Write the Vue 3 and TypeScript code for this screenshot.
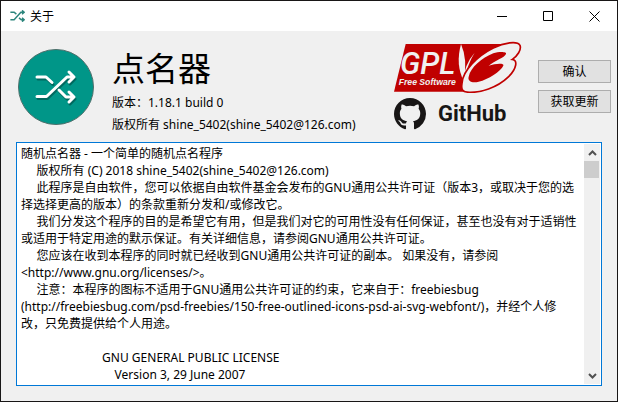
<script setup lang="ts">
import { ref } from 'vue'

const appName = '点名器'
const version = '1.18.1 build 0'
const licenseText = ref(
  [
    '随机点名器 - 一个简单的随机点名程序',
    '     版权所有 (C) 2018 shine_5402(shine_5402@126.com)',
    '     此程序是自由软件，您可以依据自由软件基金会发布的GNU通用公共许可证（版本3，或取决于您的选',
    '择选择更高的版本）的条款重新分发和/或修改它。',
    '     我们分发这个程序的目的是希望它有用，但是我们对它的可用性没有任何保证，甚至也没有对于适销性',
    '或适用于特定用途的默示保证。有关详细信息，请参阅GNU通用公共许可证。',
    '     您应该在收到本程序的同时就已经收到GNU通用公共许可证的副本。 如果没有，请参阅',
    '<http://www.gnu.org/licenses/>。',
    '     注意：本程序的图标不适用于GNU通用公共许可证的约束，它来自于：freebiesbug',
    '(http://freebiesbug.com/psd-freebies/150-free-outlined-icons-psd-ai-svg-webfont/)，并经个人修',
    '改，只免费提供给个人用途。',
    '',
    '                          GNU GENERAL PUBLIC LICENSE',
    '                              Version 3, 29 June 2007',
  ].join('\n'),
)
</script>

<template>
  <div class="window">
    <header class="titlebar">
      <svg class="app-icon" viewBox="0 0 40 32" aria-hidden="true">
        <path d="M1 6h10l6 5M1 26h10L29 6h8M32 1l6 5-6 5M24 21l6 5h7M32 21l6 5-6 5" />
      </svg>
      <span class="caption">关于</span>
      <button class="win-btn" aria-label="最小化">
        <svg viewBox="0 0 11 11"><path d="M0 5.500h10" /></svg>
      </button>
      <button class="win-btn" aria-label="最大化">
        <svg viewBox="0 0 11 11"><path d="M.5.5h9v9h-9z" /></svg>
      </button>
      <button class="win-btn" aria-label="关闭">
        <svg viewBox="0 0 11 11"><path d="M.5.5l10 10M10.500.5l-10 10" /></svg>
      </button>
    </header>

    <main class="body">
      <section class="info">
        <svg class="badge" viewBox="0 0 76 76" aria-hidden="true">
          <circle cx="38" cy="38" r="37.500" />
          <g class="shade"><path d="M20 30h9l6 5.500M20 49.500h9.500L50 30h7M52 25l5 5-5 5M42 43l7 7h8M52 45l5 5-5 5" /></g>
          <g class="mark"><path d="M19 28h9l6 5.500M19 47.500h9.500L49 28h7M51 23l5 5-5 5M41 41l7 7h8M51 43l5 5-5 5" /></g>
        </svg>
        <div class="about">
          <h1>{{ appName }}</h1>
          <p>版本：{{ version }}</p>
          <p>版权所有 shine_5402(shine_5402@126.com)</p>
        </div>
        <div class="logos">
          <svg class="gpl" viewBox="42 33 384 156" role="img" aria-label="GPL v3 Free Software">
            <path class="red" d="M77 42H400L262 185H42z" />
            <path class="white" d="M243 42Q264 90 251 152Q226 105 243 42z" />
            <path class="white" d="M284 68Q264 98 251 156Q250 106 284 68z" />
            <path class="ring" d="M246 160C248 122 292 78 340 54C372 38 412 32 420 46C425 59 412 78 397 88C414 90 410 116 386 140C350 175 300 188 268 187C246 186 243 178 246 160z" />
            <path class="red" d="M266 140C272 112 305 84 340 70C356 64 382 64 378 72C374 83 344 92 326 107C346 100 374 98 370 107C362 124 325 148 296 155C276 160 262 153 266 140z" />
            <text class="gpl-name" x="60" y="133">GPL</text>
            <text class="gpl-sub" x="56" y="165">Free Software</text>
          </svg>
          <div class="github">
            <svg class="octocat" viewBox="0 0 16 16" aria-hidden="true">
              <path d="M8 0C3.580 0 0 3.580 0 8c0 3.540 2.290 6.530 5.470 7.590.4.070.55-.17.55-.38 0-.19-.01-.82-.01-1.490-2.010.37-2.530-.49-2.690-.94-.09-.23-.48-.94-.82-1.130-.28-.15-.68-.52-.01-.53.63-.01 1.080.58 1.230.82.72 1.210 1.870.87 2.330.66.07-.52.28-.87.51-1.070-1.780-.2-3.640-.89-3.640-3.950 0-.87.31-1.590.82-2.150-.08-.2-.36-1.020.08-2.120 0 0 .67-.21 2.200.82.64-.18 1.320-.27 2-.27s1.360.09 2 .27c1.530-1.040 2.200-.82 2.200-.82.44 1.100.16 1.920.08 2.120.51.56.82 1.270.82 2.150 0 3.070-1.870 3.750-3.650 3.950.29.25.54.73.54 1.480 0 1.070-.01 1.930-.01 2.200 0 .21.15.46.55.38A8.010 8.010 0 0 0 16 8c0-4.420-3.580-8-8-8z" />
            </svg>
            <span>GitHub</span>
          </div>
        </div>
        <div class="actions">
          <button>确认</button>
          <button>获取更新</button>
        </div>
      </section>

      <section class="license">
        <textarea v-model="licenseText" readonly wrap="off" aria-label="许可证"></textarea>
        <div class="scrollbar">
          <button class="arrow" aria-label="向上滚动">
            <svg viewBox="0 0 9 6"><path d="M1 5l3.500-3.500L8 5" /></svg>
          </button>
          <div class="track"><div class="thumb"></div></div>
          <button class="arrow" aria-label="向下滚动">
            <svg viewBox="0 0 9 6"><path d="M1 1l3.500 3.500L8 1" /></svg>
          </button>
        </div>
      </section>
    </main>
  </div>
</template>

<style>
body {
  margin: 0;
}
</style>

<style scoped>
.window {
  box-sizing: border-box;
  display: flex;
  flex-direction: column;
  height: 100vh;
  border: 1px solid #181616;
  background: #f0f0f0;
  color: #000;
  font: 12px/17px "Noto Sans", "Noto Sans CJK SC", sans-serif;
}
button,
textarea {
  font: inherit;
  color: inherit;
}
.titlebar {
  display: flex;
  align-items: center;
  height: 30px;
  flex: none;
  padding-left: 9px;
  background: #fff;
}
.app-icon {
  width: 15px;
  height: 12px;
  margin-right: 5px;
  fill: none;
  stroke: #2c857c;
  stroke-width: 4;
}
.caption {
  flex: 1;
}
.win-btn {
  display: flex;
  align-items: center;
  justify-content: center;
  width: 46px;
  height: 30px;
  padding: 0;
  border: 0;
  background: none;
}
.win-btn svg {
  width: 11px;
  height: 11px;
  fill: none;
  stroke: #000;
}
.body {
  flex: 1;
  min-height: 0;
  display: flex;
  flex-direction: column;
  padding-bottom: 15px;
}
.info {
  display: flex;
  height: 111px;
  flex: none;
  padding: 0 6px 0 17px;
}
.badge {
  width: 76px;
  height: 76px;
  margin-top: 18px;
  flex: none;
}
.badge circle {
  fill: #009688;
  stroke: #4f6f6b;
}
.badge path {
  fill: none;
  stroke-width: 3;
  stroke-linecap: round;
  stroke-linejoin: round;
}
.shade {
  stroke: #00695f;
}
.mark {
  stroke: #fff;
}
.about {
  flex: 1;
  padding: 15px 0 0 18px;
  white-space: nowrap;
}
h1 {
  margin: 0;
  font-size: 33px;
  line-height: 46px;
  font-weight: 400;
}
p {
  margin: 0;
  line-height: 22px;
}
.logos {
  width: 128px;
  margin-right: 16px;
  padding-top: 10px;
  flex: none;
}
.gpl {
  display: block;
  width: 128px;
  height: 52px;
}
.red {
  fill: #c00000;
}
.white {
  fill: #f0f0f0;
}
.ring {
  fill: #f0f0f0;
  stroke: #c00000;
  stroke-width: 5;
}
.gpl-name {
  fill: #f0f0f0;
  font: italic 500 92px Roboto, sans-serif;
}
.gpl-sub {
  fill: #f0f0f0;
  font: italic 700 26px "Liberation Sans", sans-serif;
}
.github {
  display: flex;
  align-items: center;
  gap: 12px;
  margin-top: 5px;
  color: #181616;
  font: 700 22px/32px Roboto, sans-serif;
}
.octocat {
  width: 32px;
  height: 32px;
  fill: #181616;
}
.actions {
  display: flex;
  flex-direction: column;
  gap: 7px;
  width: 73px;
  padding-top: 29px;
  flex: none;
}
.actions button {
  height: 23px;
  padding: 0;
  border: 1px solid #adadad;
  background: #e1e1e1;
}
.license {
  flex: 1;
  min-height: 0;
  display: flex;
  margin: 0 15px;
  padding: 1px;
  border: 1px solid #0078d7;
  background: #fff;
}
textarea {
  flex: 1;
  min-width: 0;
  padding: 1px 3px;
  border: 0;
  outline: 0;
  resize: none;
  overflow: hidden;
  background: #fff;
  line-height: 17px;
}
.scrollbar {
  display: flex;
  flex-direction: column;
  width: 16px;
  background: #f0f0f0;
}
.arrow {
  display: flex;
  align-items: center;
  justify-content: center;
  height: 17px;
  padding: 0;
  border: 0;
  background: none;
}
.arrow svg {
  width: 9px;
  height: 6px;
  fill: none;
  stroke: #505050;
  stroke-width: 2;
}
.track {
  flex: 1;
}
.thumb {
  height: 17px;
  margin-right: 1px;
  background: #cdcdcd;
}
</style>
